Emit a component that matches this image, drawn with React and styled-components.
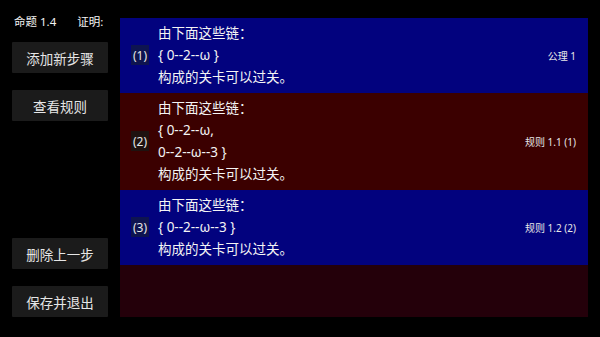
import styled, { createGlobalStyle } from "styled-components";

const GlobalStyle = createGlobalStyle`
  html, body {
    margin: 0;
    padding: 0;
    background: #000;
  }
  body {
    font-family: "Noto Sans", "Noto Sans CJK SC", sans-serif;
    color: #f2f2f2;
  }
`;

const steps = [
  {
    id: 1,
    chains: ["{ 0--2--ω }"],
    reason: "公理 1",
    tone: "blue",
  },
  {
    id: 2,
    chains: ["{ 0--2--ω,", "0--2--ω--3 }"],
    reason: "规则 1.1 (1)",
    tone: "red",
  },
  {
    id: 3,
    chains: ["{ 0--2--ω--3 }"],
    reason: "规则 1.2 (2)",
    tone: "blue",
  },
];

const App = () => {
  return (
    <>
      <GlobalStyle />
      <Screen>
        <Sidebar>
          <Header>
            <span>命题 1.4</span>
            <span>证明:</span>
          </Header>
          <ButtonGroup>
            <ActionButton>添加新步骤</ActionButton>
            <ActionButton>查看规则</ActionButton>
          </ButtonGroup>
          <ButtonGroup $bottom>
            <ActionButton>删除上一步</ActionButton>
            <ActionButton>保存并退出</ActionButton>
          </ButtonGroup>
        </Sidebar>
        <Proof>
          {steps.map((step) => (
            <Step key={step.id} $tone={step.tone}>
              <Index $tone={step.tone}>({step.id})</Index>
              <Body>
                <p>由下面这些链：</p>
                {step.chains.map((c) => (
                  <p key={c}>{c}</p>
                ))}
                <p>构成的关卡可以过关。</p>
              </Body>
              <Reason>{step.reason}</Reason>
            </Step>
          ))}
        </Proof>
      </Screen>
    </>
  );
};

const Screen = styled.div`
  display: flex;
  width: 600px;
  height: 337px;
  background: #000;
  overflow: hidden;
`;

const Sidebar = styled.aside`
  flex: none;
  width: 96px;
  padding: 13px 12px 20px 12px;
  display: flex;
  flex-direction: column;
`;

const Header = styled.div`
  display: flex;
  gap: 21px;
  padding-left: 2px;
  white-space: nowrap;
  font-size: 11.5px;
  line-height: 17px;
  color: #f4f4f4;
  margin-bottom: 12px;
`;

const ButtonGroup = styled.div`
  display: flex;
  flex-direction: column;
  gap: 17px;
  margin-top: ${(p) => (p.$bottom ? "auto" : "0")};
`;

const ActionButton = styled.button`
  width: 96px;
  height: 31px;
  border: none;
  border-radius: 1px;
  background: #1b1b1b;
  color: #e6e6e6;
  font-family: "Noto Sans CJK SC", "Noto Sans", sans-serif;
  font-size: 13.5px;
  padding: 0;
  cursor: pointer;
`;

const Proof = styled.main`
  flex: none;
  margin-top: 18px;
  width: 468px;
  height: 299px;
  background: #24000a;
  display: flex;
  flex-direction: column;
`;

const Step = styled.section`
  display: flex;
  align-items: center;
  padding: 4px 12px 5px 11px;
  background: ${(p) => (p.$tone === "blue" ? "#02027e" : "#3b0000")};
`;

const Index = styled.div`
  width: 18px;
  height: 20px;
  display: flex;
  align-items: center;
  justify-content: center;
  font-size: 12px;
  color: #e8e8e8;
  background: ${(p) => (p.$tone === "blue" ? "#0e1450" : "#1e1210")};
  margin-right: 9px;
`;

const Body = styled.div`
  flex: 1;
  font-family: "Noto Sans", "Noto Sans CJK SC", sans-serif;
  font-size: 13.5px;
  line-height: 22px;
  color: #f4f4f4;

  p {
    margin: 0;
  }
`;

const Reason = styled.div`
  font-size: 10px;
  color: #e8e8e8;
`;

export default App;
